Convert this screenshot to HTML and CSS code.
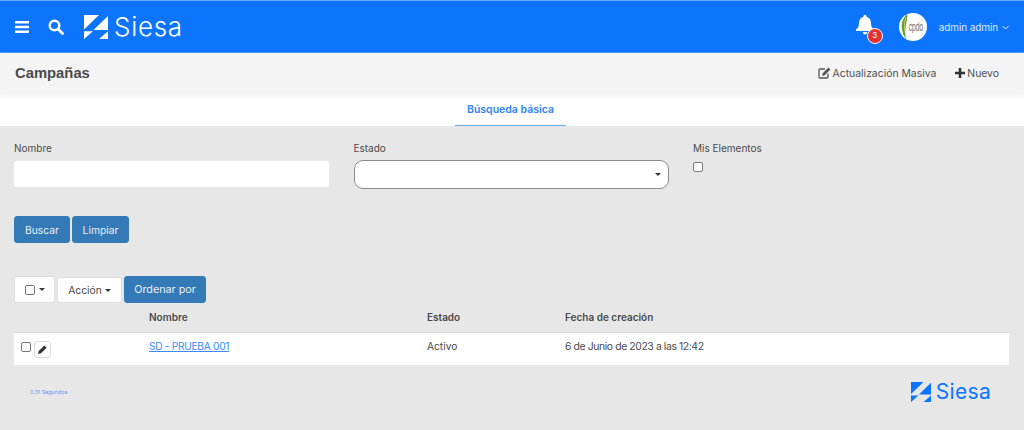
FILE: index.html
```html
<!DOCTYPE html>
<html lang="es">
<head>
<meta charset="utf-8">
<title>Campañas</title>
<link rel="stylesheet" href="styles.css">
</head>
<body>
<header class="topbar">
  <div class="topbar-left">
    <svg class="icon-menu" width="14" height="12" viewBox="0 0 14 12"><path d="M0 0h14v2.400H0zM0 4.800h14v2.400H0zM0 9.600h14V12H0z" fill="#fff"/></svg>
    <svg class="icon-search" width="16" height="16" viewBox="0 0 16 16"><circle cx="6.500" cy="6.500" r="4.800" fill="none" stroke="#fff" stroke-width="2.400"/><path d="M10 10l4.500 4.500" stroke="#fff" stroke-width="2.800" stroke-linecap="round"/></svg>
    <div class="brand">
      <svg width="24" height="24" viewBox="0 0 24 24"><path d="M0 0h15L0 14.500zM24 1v14H9.500zM0 16.200h9L0 24zM24 16.200V24h-9z" fill="#fff"/></svg>
      <span class="brand-name">Siesa</span>
    </div>
  </div>
  <div class="topbar-right">
    <div class="bell">
      <svg width="18" height="20" viewBox="0 0 18 20"><path d="M9 0c1 0 1.600.7 1.600 1.700C13.500 2.500 15 5 15 8c0 3.500 1 5 3 6.500V16H0v-1.500C2 13 3 11.500 3 8c0-3 1.500-5.500 4.400-6.300C7.400.7 8 0 9 0zM6.800 17h4.400c0 1.500-1 2.500-2.200 2.500S6.800 18.500 6.800 17z" fill="#fff"/></svg>
      <span class="badge">3</span>
    </div>
    <div class="avatar">
      <svg class="leaf" width="8" height="25" viewBox="0 0 8 25"><path d="M6 0C2 4 0 9 1 15c.5 4 2 7 4 10-1-5-1-9 0-14C5.500 7 7 4 6 0z" fill="#5f9e3a"/><path d="M5 3C3 8 3 14 4.500 20" fill="none" stroke="#e4d96a" stroke-width=".8"/></svg>
      <span class="avatar-text">cpdo</span>
    </div>
    <span class="user">admin admin</span>
    <svg class="chev" width="7" height="5" viewBox="0 0 7 5"><path d="M.5 1l3 3 3-3" fill="none" stroke="#e6f0ff" stroke-width="1"/></svg>
  </div>
</header>

<div class="subbar">
  <h1 class="title">Campañas</h1>
  <div class="actions">
    <span class="action">
      <svg width="13" height="12" viewBox="0 0 13 12"><path d="M10 6.500V10a1 1 0 0 1-1 1H2a1 1 0 0 1-1-1V3a1 1 0 0 1 1-1h5" fill="none" stroke="#555" stroke-width="1.300"/><path d="M4.500 6.500L10.500.6l1.900 1.900-6 5.900-2.200.3z" fill="#555"/></svg>
      Actualización Masiva
    </span>
    <span class="action">
      <svg width="10" height="10" viewBox="0 0 10 10"><path d="M3.700 0h2.600v3.700H10v2.600H6.300V10H3.700V6.300H0V3.700h3.700z" fill="#333"/></svg>
      Nuevo
    </span>
  </div>
</div>

<nav class="tabs"><a class="tab">Búsqueda básica</a></nav>

<main class="content">
  <form class="filters">
    <div class="field">
      <label class="label">Nombre</label>
      <input class="input" type="text">
    </div>
    <div class="field">
      <label class="label">Estado</label>
      <div class="select"><span class="caret"></span></div>
    </div>
    <div class="field">
      <label class="label">Mis Elementos</label>
      <span class="check check-form"></span>
    </div>
  </form>

  <div class="buttons">
    <button class="btn btn-primary btn-search" type="button">Buscar</button>
    <button class="btn btn-primary btn-clear" type="button">Limpiar</button>
  </div>

  <div class="toolbar">
    <button class="btn btn-default btn-check" type="button"><span class="check"></span><span class="caret"></span></button>
    <button class="btn btn-default btn-action" type="button">Acción <span class="caret"></span></button>
    <button class="btn btn-primary btn-order" type="button">Ordenar por</button>
  </div>

  <div class="grid-table">
    <div class="row row-head">
      <div class="cell-select"></div>
      <div>Nombre</div>
      <div>Estado</div>
      <div>Fecha de creación</div>
    </div>
    <div class="row row-body">
      <div class="cell-select">
        <span class="check"></span>
        <span class="edit"><svg width="9" height="9" viewBox="0 0 9 9"><path d="M6.300.4l2.300 2.300-5.600 5.600-2.900.6.600-2.900z" fill="#333"/></svg></span>
      </div>
      <div><a class="link">SD - PRUEBA 001</a></div>
      <div>Activo</div>
      <div class="date">6 de Junio de 2023 a las 12:42</div>
    </div>
  </div>

  <footer class="foot">
    <span class="time">0.31 Segundos</span>
    <div class="brand brand-foot">
      <svg width="20" height="20" viewBox="0 0 24 24"><path d="M0 0h15L0 14.500zM24 1v14H9.500zM0 16.200h9L0 24zM24 16.200V24h-9z" fill="#0d75fd"/></svg>
      <span class="brand-name">Siesa</span>
    </div>
  </footer>
</main>
</body>
</html>
```

FILE: styles.css
```css
* { box-sizing: border-box; }
html, body { margin: 0; height: 100%; }
body {
  background: #e7e7e7;
  color: #4a4a4a;
  font-family: Inter, "Liberation Sans", sans-serif;
  font-size: 10.300px;
  overflow: hidden;
}
.topbar {
  height: 53px;
  background: #0d75fd;
  border-top: 1px solid #6aa8f5;
  border-bottom: 1px solid #4d98fb;
  display: flex;
  align-items: center;
  justify-content: space-between;
  padding: 0 15px 0 15px;
}
.topbar-left, .topbar-right { display: flex; align-items: center; }
.icon-search { margin-left: 19px; }
.brand { display: flex; align-items: center; gap: 6px; }
.topbar .brand { margin-left: 20px; }
.brand-name {
  color: #fff;
  font-family: Inter, sans-serif;
  font-size: 26px;
  font-weight: 300;
  letter-spacing: .7px;
  line-height: 1;
}
.bell { position: relative; width: 18px; height: 20px; margin-right: 25px; margin-top: -3px; }
.badge {
  position: absolute;
  left: 11px;
  top: 13px;
  width: 16px;
  height: 16px;
  border-radius: 50%;
  background: #e03232;
  border: 1.500px solid #fff;
  color: #fff;
  font-size: 8px;
  line-height: 13px;
  text-align: center;
}
.avatar {
  width: 28px;
  height: 28px;
  border-radius: 50%;
  background: #fff;
  display: flex;
  align-items: center;
  justify-content: center;
  overflow: hidden;
  margin-right: 12px;
}
.leaf { margin-right: -1px; margin-left: -2px; }
.avatar-text {
  display: inline-block;
  color: #777;
  font-size: 7px;
  letter-spacing: -.4px;
  transform: scale(.95, 1.7);
}
.user { color: #dbe9ff; font-size: 10px; letter-spacing: -.12px; margin-top: 1px; }
.chev { margin-left: 4px; margin-top: 1px; }

.subbar {
  height: 42px;
  background: #f4f4f4;
  display: flex;
  align-items: center;
  justify-content: space-between;
  padding: 0 25px 0 15px;
  box-shadow: 0 2px 5px rgba(0,0,0,.05);
  position: relative;
}
.title {
  margin: 0 0 2px;
  font-family: "Liberation Sans", sans-serif;
  font-size: 14.800px;
  font-weight: 700;
  color: #4a4a4a;
}
.actions { display: flex; gap: 19px; }
.action { display: flex; align-items: center; gap: 2px; color: #4f4f4f; font-size: 10.400px; margin-bottom: 2px; }

.tabs { height: 31px; background: #fff; display: flex; justify-content: center; padding-right: 3px; }
.tab {
  width: 111px;
  text-align: center;
  color: #2f83fb;
  font-size: 10.500px;
  font-weight: 600;
  line-height: 29px;
  border-bottom: 1px solid #6aa8f5;
}

.content { padding: 0 15px 0 14px; }
.filters { display: grid; grid-template-columns: 339.500px 339.500px 1fr; padding-top: 15px; }
.field { display: flex; flex-direction: column; align-items: flex-start; }
.label { font-size: 10px; line-height: 15px; color: #4a4a4a; }
.input {
  margin-top: 5px;
  width: 315px;
  height: 26px;
  border: 0;
  border-radius: 2px;
  background: #fff;
}
.select {
  margin-top: 4px;
  width: 315.500px;
  height: 29px;
  background: #fff;
  border: 1px solid #8c8c8c;
  border-radius: 9px;
  display: flex;
  align-items: center;
  justify-content: flex-end;
  padding-right: 7px;
}
.caret {
  display: inline-block;
  border-top: 3.500px solid #333;
  border-left: 3.500px solid transparent;
  border-right: 3.500px solid transparent;
  vertical-align: middle;
}
.check {
  display: inline-block;
  width: 10px;
  height: 10px;
  background: #fff;
  border: 1px solid #777;
  border-radius: 2px;
}
.check-form { margin-top: 6px; }

.buttons { display: flex; gap: 2px; margin-top: 27px; }
.btn {
  height: 27px;
  padding: 0;
  border-radius: 3px;
  font-family: inherit;
  font-size: 10.300px;
}
.btn-primary { background: #337ab7; border: 1px solid #337ab7; color: #e9f0f7; }
.btn-default { background: #fff; border: 1px solid #ddd; color: #4a4a4a; }
.btn-search { width: 56px; }
.btn-clear { width: 57px; }
.toolbar { display: flex; align-items: center; gap: 2px; margin-top: 33px; }
.btn-check { width: 41px; display: flex; align-items: center; justify-content: center; gap: 4px; }
.btn-action { width: 65px; height: 26px; }
.btn-order { width: 82px; font-size: 10.800px; }

.grid-table { margin-top: 2px; }
.row { display: grid; grid-template-columns: 135px 278px 138px 1fr; }
.row-head { height: 28px; align-items: center; padding-bottom: 3px; font-weight: 600; font-size: 10px; border-bottom: 1px solid #dcdcdc; color: #4a4a4a; }
.row-body { height: 32px; background: #fff; font-size: 10.200px; line-height: 13px; padding-top: 7px; }
.date { font-size: 10.400px; letter-spacing: -.4px; }
.cell-select { display: flex; align-items: flex-start; gap: 3px; padding-left: 7px; }
.cell-select .check { margin-top: 2px; }
.edit {
  width: 17px;
  height: 17px;
  margin-top: 1px;
  border: 1px solid #ddd;
  border-radius: 3px;
  background: #fff;
  display: flex;
  align-items: center;
  justify-content: center;
}
.link { color: #3a8afc; text-decoration: underline; font-size: 10.200px; letter-spacing: -.3px; }

.foot {
  display: flex;
  justify-content: space-between;
  align-items: center;
  padding: 16px 18px 0 16px;
}
.time { font-size: 5.400px; color: #5b8ff5; }
.brand-foot { gap: 5px; }
.brand-foot .brand-name { color: #0d75fd; font-size: 21px; font-weight: 400; letter-spacing: .3px; }
```
